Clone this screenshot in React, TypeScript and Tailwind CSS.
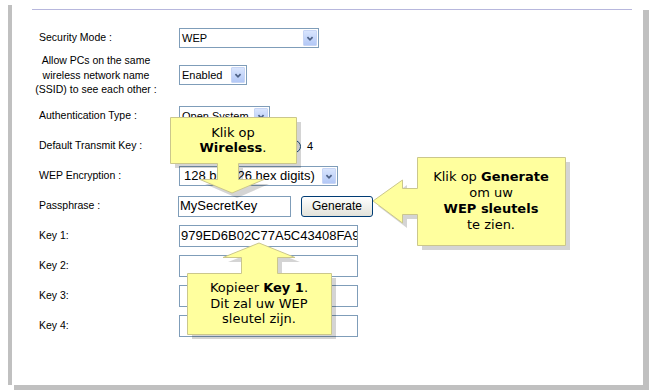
import React from 'react'

function Chevron() {
  return (
    <svg width="14" height="15" viewBox="0 0 14 15">
      <path d="M4 6 L7 9 L10 6" stroke="#4d6185" strokeWidth="2" fill="none" />
    </svg>
  )
}

function Select({ value, width, big }: { value: string; width: string; big?: boolean }) {
  return (
    <div className={`flex h-[20px] items-center border border-[#7f9db9] bg-white ${width}`}>
      <span
        className={`flex-1 overflow-hidden whitespace-nowrap text-black ${
          big ? 'pl-[4px] text-[13px]' : 'pl-[2px] text-[11px]'
        }`}
      >
        {value}
      </span>
      <span className="mr-px flex h-[16px] w-[14px] items-center justify-center rounded-[1px] border border-[#c7d5f5] bg-linear-to-b from-[#d9e5fd] to-[#b3c8f6]">
        <Chevron />
      </span>
    </div>
  )
}

function TextBox({ value, width, height }: { value?: string; width: string; height: string }) {
  return (
    <div
      className={`flex items-center overflow-hidden whitespace-nowrap border border-[#7f9db9] bg-white pl-px text-[13px] text-black ${width} ${height}`}
    >
      {value}
    </div>
  )
}

function Radio({ label }: { label: string }) {
  return (
    <div className="mr-[11px] flex items-center">
      <span className="h-[13px] w-[13px] rounded-full border border-[#1c5180] bg-linear-to-br from-[#dcdcd5] to-white" />
      <span className="ml-[6px] w-[6px] text-[11px] text-black">{label}</span>
    </div>
  )
}

function Row({ label, children }: { label: string; children?: React.ReactNode }) {
  return (
    <div className="flex h-[30px] items-center">
      <div className="w-[140px] text-[10.5px] text-black">{label}</div>
      {children}
    </div>
  )
}

export default function App() {
  return (
    <div className="relative h-[392px] w-[649px] overflow-hidden bg-white font-['Liberation_Sans',Arial,sans-serif]">
      <div className="ml-[8px] mt-[5px] flex h-[380px] w-[635px] flex-col border-l-4 border-[#c0c0c0] bg-white pt-[4px] shadow-[6px_5px_0_0_#c0c0c0]">
        <div className="ml-[20px] h-px w-[600px] bg-[#b7b7dd]" />
        <div className="mt-[13px] flex flex-col pl-[27px]">
          <Row label="Security Mode :">
            <Select value="WEP" width="w-[140px]" />
          </Row>
          <div className="flex h-[44px] items-center">
            <div className="-ml-[5px] w-[145px] pr-[21px] text-center text-[10.5px] leading-[14.5px] whitespace-nowrap text-black">
              Allow PCs on the same
              <br />
              wireless network name
              <br />
              (SSID) to see each other :
            </div>
            <Select value="Enabled" width="w-[68px]" />
          </div>
          <div className="mt-[4px]">
            <Row label="Authentication Type :">
              <Select value="Open System" width="w-[91px]" />
            </Row>
          </div>
          <Row label="Default Transmit Key :">
            <div className="ml-px flex items-center">
              <Radio label="1" />
              <Radio label="2" />
              <Radio label="3" />
              <Radio label="4" />
            </div>
          </Row>
          <Row label="WEP Encryption :">
            <Select value="128 bits (26 hex digits)" width="w-[159px]" big />
          </Row>
          <Row label="Passphrase :">
            <div className="-ml-px flex items-center">
              <TextBox value="MySecretKey" width="w-[113px]" height="h-[21px]" />
              <button className="ml-[10px] h-[21px] w-[72px] rounded-[3px] border border-[#003c74] bg-linear-to-b from-white to-[#e2e2da] text-[12px] text-black">
                Generate
              </button>
            </div>
          </Row>
          <Row label="Key 1:">
            <TextBox value="979ED6B02C77A5C43408FA9" width="w-[179px]" height="h-[22px]" />
          </Row>
          <Row label="Key 2:">
            <TextBox width="w-[179px]" height="h-[22px]" />
          </Row>
          <Row label="Key 3:">
            <TextBox width="w-[179px]" height="h-[22px]" />
          </Row>
          <Row label="Key 4:">
            <TextBox width="w-[179px]" height="h-[22px]" />
          </Row>
        </div>
      </div>

      {/* callouts */}
      <svg className="pointer-events-none absolute left-0 top-0" width="649" height="392">
        <g fill="rgba(0,0,0,0.17)" transform="translate(5 5)">
          <polygon points="170,117 296,117 296,163 238,163 238,179 264,179 232,193 200,179 217,179 217,163 170,163" />
          <polygon points="417,157 565,157 565,245 417,245 417,214 402,214 402,223 373,201 402,180 402,188 417,188" />
          <polygon points="187,273 241,273 241,257 223,257 259,243 295,257 277,257 277,273 331,273 331,334 187,334" />
        </g>
        <g fill="#ffff9e" stroke="#cbc78c" strokeWidth="1">
          <polygon points="170.5,117.5 296.5,117.5 296.5,163.5 238.5,163.5 238.5,179.5 264,179.5 232,193 200,179.5 217.5,179.5 217.5,163.5 170.5,163.5" />
          <polygon points="417.5,157.5 565.5,157.5 565.5,245.5 417.5,245.5 417.5,214.5 402.5,214.5 402.5,223 373,201 402.5,180 402.5,188.5 417.5,188.5" />
          <polygon points="187.5,273.5 241.5,273.5 241.5,257.5 223,257.5 259,243 295,257.5 277.5,257.5 277.5,273.5 331.5,273.5 331.5,334.5 187.5,334.5" />
        </g>
      </svg>

      <div className="absolute left-[170px] top-[117px] flex h-[46px] w-[126px] flex-col items-center justify-center text-center font-['DejaVu_Sans',Verdana,sans-serif] text-[13px] leading-[15px] text-black">
        <span>Klik op</span>
        <span>
          <b>Wireless</b>.
        </span>
      </div>
      <div className="absolute left-[417px] top-[157px] flex h-[88px] w-[148px] flex-col items-center justify-center text-center font-['DejaVu_Sans',Verdana,sans-serif] text-[13px] leading-[16px] text-black">
        <span>
          Klik op <b>Generate</b>
        </span>
        <span>om uw</span>
        <span>
          <b>WEP sleutels</b>
        </span>
        <span>te zien.</span>
      </div>
      <div className="absolute left-[187px] top-[273px] flex h-[61px] w-[144px] flex-col items-center justify-center text-center font-['DejaVu_Sans',Verdana,sans-serif] text-[13px] leading-[15.5px] text-black">
        <span>
          Kopieer <b>Key 1</b>.
        </span>
        <span>Dit zal uw WEP</span>
        <span>sleutel zijn.</span>
      </div>
    </div>
  )
}
